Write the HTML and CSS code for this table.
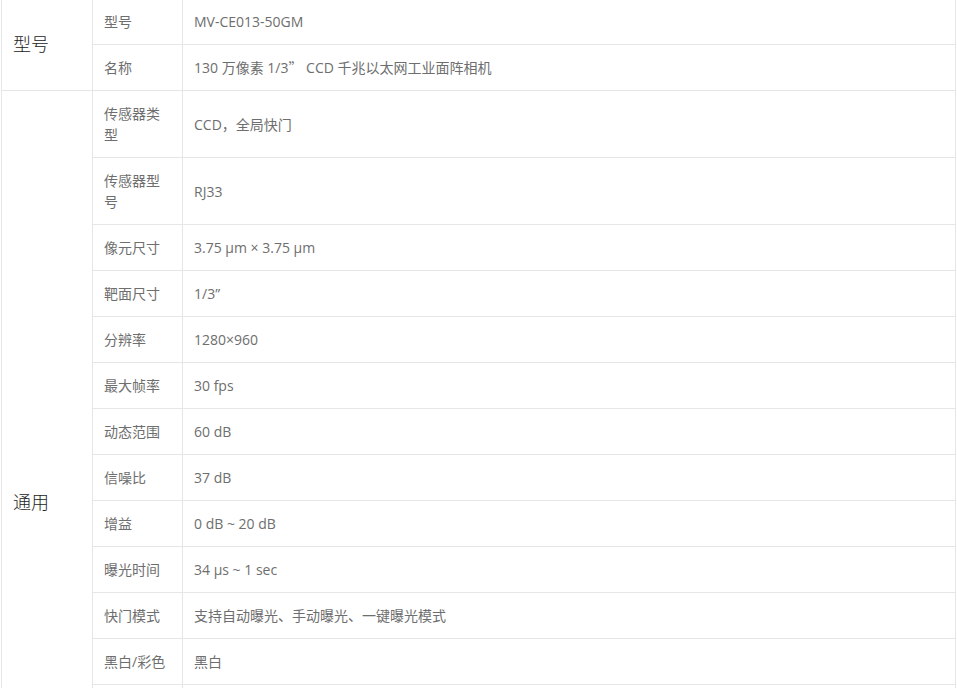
FILE: index.html
```html
<!DOCTYPE html>
<html lang="zh-CN">
<head>
  <meta charset="UTF-8">
  <meta name="viewport" content="width=device-width, initial-scale=1.0">
  <title>MV-CE013-50GM 参数</title>
  <link rel="stylesheet" href="styles.css">
</head>
<body>
  <table class="spec">
    <colgroup>
      <col class="col-group">
      <col class="col-name">
      <col class="col-value">
    </colgroup>
    <tbody>
      <tr>
        <td class="group" rowspan="2">型号</td>
        <td class="name">型号</td>
        <td class="value">MV-CE013-50GM</td>
      </tr>
      <tr>
        <td class="name">名称</td>
        <td class="value">130 万像素 1/3<span class="cjk">”</span> CCD 千兆以太网工业面阵相机</td>
      </tr>
      <tr>
        <td class="group" rowspan="17">通用</td>
        <td class="name">传感器类型</td>
        <td class="value">CCD<span class="cjk">，</span>全局快门</td>
      </tr>
      <tr>
        <td class="name">传感器型号</td>
        <td class="value">RJ33</td>
      </tr>
      <tr>
        <td class="name">像元尺寸</td>
        <td class="value">3.75 µm × 3.75 µm</td>
      </tr>
      <tr>
        <td class="name">靶面尺寸</td>
        <td class="value">1/3”</td>
      </tr>
      <tr>
        <td class="name">分辨率</td>
        <td class="value">1280×960</td>
      </tr>
      <tr>
        <td class="name">最大帧率</td>
        <td class="value">30 fps</td>
      </tr>
      <tr>
        <td class="name">动态范围</td>
        <td class="value">60 dB</td>
      </tr>
      <tr>
        <td class="name">信噪比</td>
        <td class="value">37 dB</td>
      </tr>
      <tr>
        <td class="name">增益</td>
        <td class="value">0 dB ~ 20 dB</td>
      </tr>
      <tr>
        <td class="name">曝光时间</td>
        <td class="value">34 μs ~ 1 sec</td>
      </tr>
      <tr>
        <td class="name">快门模式</td>
        <td class="value">支持自动曝光、手动曝光、一键曝光模式</td>
      </tr>
      <tr>
        <td class="name">黑白/彩色</td>
        <td class="value">黑白</td>
      </tr>
      <tr>
        <td class="name">像素格式</td>
        <td class="value">Mono 8/10/12</td>
      </tr>
      <tr>
        <td class="name">图像缓存</td>
        <td class="value">64 MB</td>
      </tr>
      <tr>
        <td class="name">数据接口</td>
        <td class="value">Gigabit Ethernet</td>
      </tr>
      <tr>
        <td class="name">供电</td>
        <td class="value">12 VDC</td>
      </tr>
      <tr>
        <td class="name">功耗</td>
        <td class="value">典型值 3 W @ 12 VDC</td>
      </tr>
    </tbody>
  </table>
</body>
</html>
```

FILE: styles.css
```css
body {
  margin: 0;
  padding: 0;
  background-color: #ffffff;
  font-family: "Open Sans", "Noto Sans CJK SC", sans-serif;
}

.spec {
  border-collapse: collapse;
  table-layout: fixed;
  width: 955px;
  margin: -2px 0 0 1px;
}

.col-group {
  width: 91px;
}
.col-name {
  width: 90px;
}

.spec td {
  border: 1px solid #e6e6e6;
  padding: 12px 11px;
  font-size: 14px;
  line-height: 21px;
  color: #6e6e6e;
  text-align: left;
  vertical-align: middle;
}

.spec td.group {
  font-size: 18px;
  font-weight: 300;
  color: #222222;
}

.cjk {
  font-family: "Noto Sans CJK SC", sans-serif;
}
```
